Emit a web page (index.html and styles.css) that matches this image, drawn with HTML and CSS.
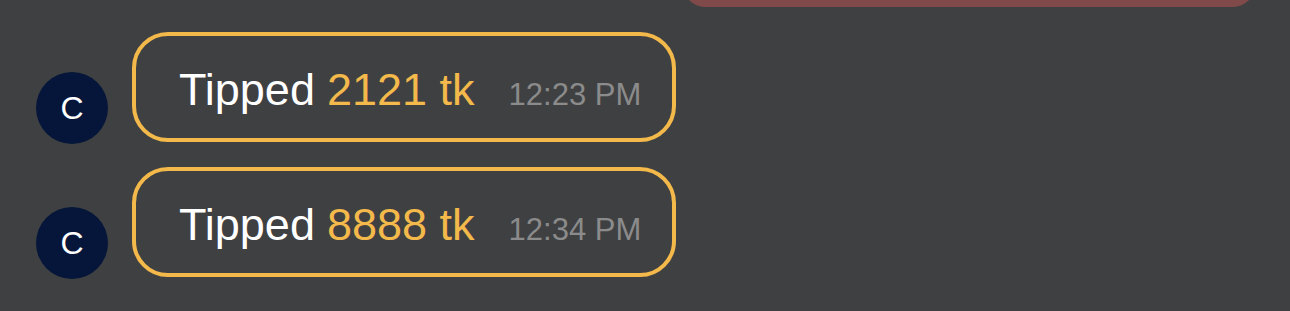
FILE: index.html
```html
<html><head>
<title>Tips</title>
<link rel="stylesheet" href="styles.css">
</head>
<body>
<div id="chat">
  <div class="row outgoing">
    <div class="bubble-red"></div>
  </div>

  <div class="row">
    <div class="avatar">C</div>
    <div class="tip">
      <span class="label">Tipped</span>
      <span class="amount">2121 tk</span>
      <span class="time">12:23 PM</span>
    </div>
  </div>

  <div class="row">
    <div class="avatar">C</div>
    <div class="tip">
      <span class="label">Tipped</span>
      <span class="amount">8888 tk</span>
      <span class="time">12:34 PM</span>
    </div>
  </div>
</div>
</body></html>
```

FILE: styles.css
```css
body {
  margin: 0;
  padding: 0;
  height: 100vh;
  background-color: #3f4042;
  font-family: "Liberation Sans", Arial, sans-serif;
  overflow: hidden;
  color: #fff;
}

#chat {
  display: flex;
  flex-direction: column;
  gap: 25px;
  padding: 0 35px 0 36px;
}

.row {
  display: flex;
  align-items: flex-end;
  gap: 24px;
}

.outgoing {
  justify-content: flex-end;
}

.bubble-red {
  width: 572px;
  height: 50px;
  margin-top: -43px;
  background-color: #7f4a49;
  border-radius: 22px;
}

.avatar {
  width: 72px;
  height: 72px;
  border-radius: 50%;
  background-color: #06163a;
  display: flex;
  justify-content: center;
  align-items: center;
  font-size: 32px;
  flex-shrink: 0;
  margin-bottom: -2px;
}

.tip {
  display: flex;
  align-items: baseline;
  border: 4px solid #f3b94b;
  border-radius: 36px;
  padding: 29px 31px 23px 43px;
  line-height: 50px;
  font-size: 45px;
}

.label {
  margin-right: 12px;
}

.amount {
  color: #f3b94b;
  margin-right: 34px;
}

.time {
  font-size: 31px;
  line-height: 36px;
  color: #8b8b8b;
}
```
